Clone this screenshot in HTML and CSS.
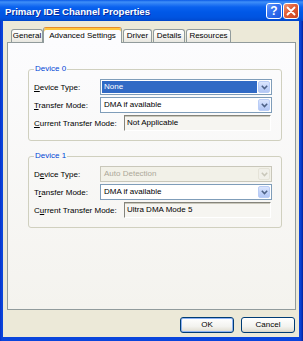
FILE: index.html
```html
<!DOCTYPE html>
<html>
<head>
<meta charset="utf-8">
<link rel="stylesheet" href="styles.css">
</head>
<body>
<div class="window">
  <div class="titlebar">
    <span class="title">Primary IDE Channel Properties</span>
    <div class="caption-btns">
      <div class="cap cap-help">?</div>
      <div class="cap cap-close">
        <svg width="10" height="10" viewBox="0 0 10 10"><path d="M1.5 1.5 L8.5 8.5 M8.5 1.5 L1.5 8.5" stroke="#fff" stroke-width="1.8" stroke-linecap="round"/></svg>
      </div>
    </div>
  </div>
  <div class="client">
    <div class="tabs">
      <div class="tab t-general">General</div>
      <div class="tab active t-adv">Advanced Settings</div>
      <div class="tab t-driver">Driver</div>
      <div class="tab t-details">Details</div>
      <div class="tab t-res">Resources</div>
    </div>
    <div class="panel">
      <fieldset class="group">
        <legend>Device 0</legend>
        <div class="row">
          <span class="lbl"><u>D</u>evice Type:</span>
          <div class="combo">
            <span class="combo-text sel">None</span>
            <span class="combo-btn"><svg width="7" height="5" viewBox="0 0 7 5"><path d="M0.8 0.8 L3.5 3.6 L6.2 0.8" fill="none" stroke="#4D6185" stroke-width="1.5"/></svg></span>
          </div>
        </div>
        <div class="row">
          <span class="lbl"><u>T</u>ransfer Mode:</span>
          <div class="combo">
            <span class="combo-text">DMA if available</span>
            <span class="combo-btn"><svg width="7" height="5" viewBox="0 0 7 5"><path d="M0.8 0.8 L3.5 3.6 L6.2 0.8" fill="none" stroke="#4D6185" stroke-width="1.5"/></svg></span>
          </div>
        </div>
        <div class="row static-row">
          <span class="lbl"><u>C</u>urrent Transfer Mode:</span>
          <div class="static">Not Applicable</div>
        </div>
      </fieldset>
      <fieldset class="group group2">
        <legend>Device 1</legend>
        <div class="row">
          <span class="lbl">D<u>e</u>vice Type:</span>
          <div class="combo disabled">
            <span class="combo-text">Auto Detection</span>
            <span class="combo-btn"><svg width="7" height="5" viewBox="0 0 7 5"><path d="M0.8 0.8 L3.5 3.6 L6.2 0.8" fill="none" stroke="#C9C7BA" stroke-width="1.5"/></svg></span>
          </div>
        </div>
        <div class="row">
          <span class="lbl">T<u>r</u>ansfer Mode:</span>
          <div class="combo">
            <span class="combo-text">DMA if available</span>
            <span class="combo-btn"><svg width="7" height="5" viewBox="0 0 7 5"><path d="M0.8 0.8 L3.5 3.6 L6.2 0.8" fill="none" stroke="#4D6185" stroke-width="1.5"/></svg></span>
          </div>
        </div>
        <div class="row static-row">
          <span class="lbl">C<u>u</u>rrent Transfer Mode:</span>
          <div class="static">Ultra DMA Mode 5</div>
        </div>
      </fieldset>
    </div>
    <div class="buttons">
      <div class="btn default">OK</div>
      <div class="btn">Cancel</div>
    </div>
  </div>
</div>
</body>
</html>
```
FILE: styles.css
```css
* { box-sizing: border-box; }
html, body { margin: 0; padding: 0; }
body {
  width: 303px;
  height: 341px;
  overflow: hidden;
  font-family: "Liberation Sans", Arial, sans-serif;
  font-size: 8px;
  color: #000;
  background: #0A3FD6;
}
.window {
  width: 303px;
  height: 341px;
  display: flex;
  flex-direction: column;
  background: linear-gradient(to right, #0832C8 0, #0A45DC 2px, #0A45DC 299px, #0B3FD0 301px, #00209C 303px);
}
.titlebar {
  height: 21px;
  flex: none;
  display: flex;
  align-items: flex-start;
  background: linear-gradient(to bottom, #0A5AE6 0, #3F8FF8 2px, #2A7CF4 4px, #0A62EF 7px, #0058E7 12px, #0054E1 17px, #004CD4 20px, #0043C4 21px);
}
.title {
  color: #fff;
  font-weight: bold;
  font-size: 9.6px;
  line-height: 11px;
  padding: 6px 0 0 5px;
  text-shadow: 1px 1px 0 #0C2D9C;
  white-space: nowrap;
}
.caption-btns {
  margin-left: auto;
  display: flex;
  gap: 1px;
  padding: 3px 4px 0 0;
}
.cap {
  width: 16px;
  height: 16px;
  border: 1px solid #fff;
  border-radius: 3px;
  display: flex;
  align-items: center;
  justify-content: center;
  color: #fff;
  font-weight: bold;
  font-size: 12px;
  line-height: 14px;
}
.cap-help {
  background: linear-gradient(135deg, #6C9BFB 0%, #3573F2 40%, #1E58DE 100%);
}
.cap-close {
  background: linear-gradient(135deg, #EE9677 0%, #E2603A 40%, #C8421E 100%);
}
.client {
  flex: 1;
  margin: 0 4px 4px 3px;
  background: #ECE9D8;
  display: flex;
  flex-direction: column;
}
.tabs {
  height: 21px;
  flex: none;
  display: flex;
  align-items: flex-end;
  padding: 6px 0 0 8px;
}
.tab {
  height: 13px;
  border: 1px solid #919B9C;
  border-bottom: none;
  border-radius: 3px 3px 0 0;
  background: linear-gradient(to bottom, #FFFFFF 0%, #F6F6F3 50%, #E8E7E0 100%);
  text-align: center;
  line-height: 12px;
  white-space: nowrap;
}
.tab.active {
  height: 16px;
  margin-bottom: -1px;
  position: relative;
  z-index: 1;
  background: #FCFCFE;
  border-top-color: #E68B2C;
  box-shadow: inset 0 2px 0 #FFC73C;
  line-height: 13px;
  padding-top: 1px;
}
.t-general { width: 32px; }
.t-adv { width: 79px; }
.t-driver { width: 29px; margin-left: 1px; }
.t-details { width: 32px; margin-left: 1px; }
.t-res { width: 45px; margin-left: 1px; }
.panel {
  flex: none;
  height: 268px;
  margin: 0 3px 0 4px;
  border: 1px solid #919B9C;
  background: linear-gradient(to bottom, #FCFCFE 0%, #F4F3EE 100%);
  padding: 21px 13px 0 20px;
}
.group {
  margin: 0;
  height: 77px;
  border: 1px solid #D0D0BF;
  border-radius: 3px;
  padding: 5px 9px 0 5px;
  min-width: 0;
}
.group2 { margin-top: 10px; }
.group legend {
  color: #0046D5;
  padding: 0 1px;
  line-height: 10px;
  font-size: 8px;
}
.row {
  display: flex;
  align-items: center;
  height: 16px;
  margin-bottom: 2px;
}
.static-row { margin-top: 2px; }
.lbl { white-space: nowrap; }
.combo {
  margin-left: auto;
  width: 172px;
  height: 16px;
  border: 1px solid #7F9DB9;
  background: #fff;
  display: flex;
  padding: 1px;
}
.combo-text {
  flex: 1;
  padding-left: 2px;
  margin-right: 1px;
  line-height: 12px;
  white-space: nowrap;
}
.combo-text.sel {
  background: #316AC5;
  color: #fff;
}
.combo-btn {
  width: 12px;
  height: 12px;
  border: 1px solid #BACDF6;
  border-radius: 2px;
  background: linear-gradient(to bottom, #DCE6FD 0%, #C3D4FA 50%, #B3C7F4 100%);
  display: flex;
  align-items: center;
  justify-content: center;
}
.combo.disabled {
  border-color: #C9C7BA;
  background: #F2F1E8;
}
.combo.disabled .combo-text { color: #ACA899; }
.combo.disabled .combo-btn {
  border-color: #E5E3D8;
  background: #F1F0E9;
}
.static {
  margin-left: auto;
  margin-right: 1px;
  width: 147px;
  height: 16px;
  border: 1px solid;
  border-color: #85847C #FFFFFF #FFFFFF #85847C;
  box-shadow: inset 0 1px 0 #C9C7BA;
  background: #F6F5F1;
  padding-left: 2px;
  line-height: 14px;
  white-space: nowrap;
}
.buttons {
  display: flex;
  justify-content: flex-end;
  gap: 7px;
  padding: 7px 4px 0 0;
}
.btn {
  width: 54px;
  height: 16px;
  border: 1px solid #003C74;
  border-radius: 3px;
  background: linear-gradient(to bottom, #FFFFFF 0%, #F3F3EF 60%, #E4E1D6 90%, #D6D0C5 100%);
  text-align: center;
  line-height: 14px;
}
.btn.default {
  box-shadow: inset 0 0 0 1px #8DB2F3;
}
```
